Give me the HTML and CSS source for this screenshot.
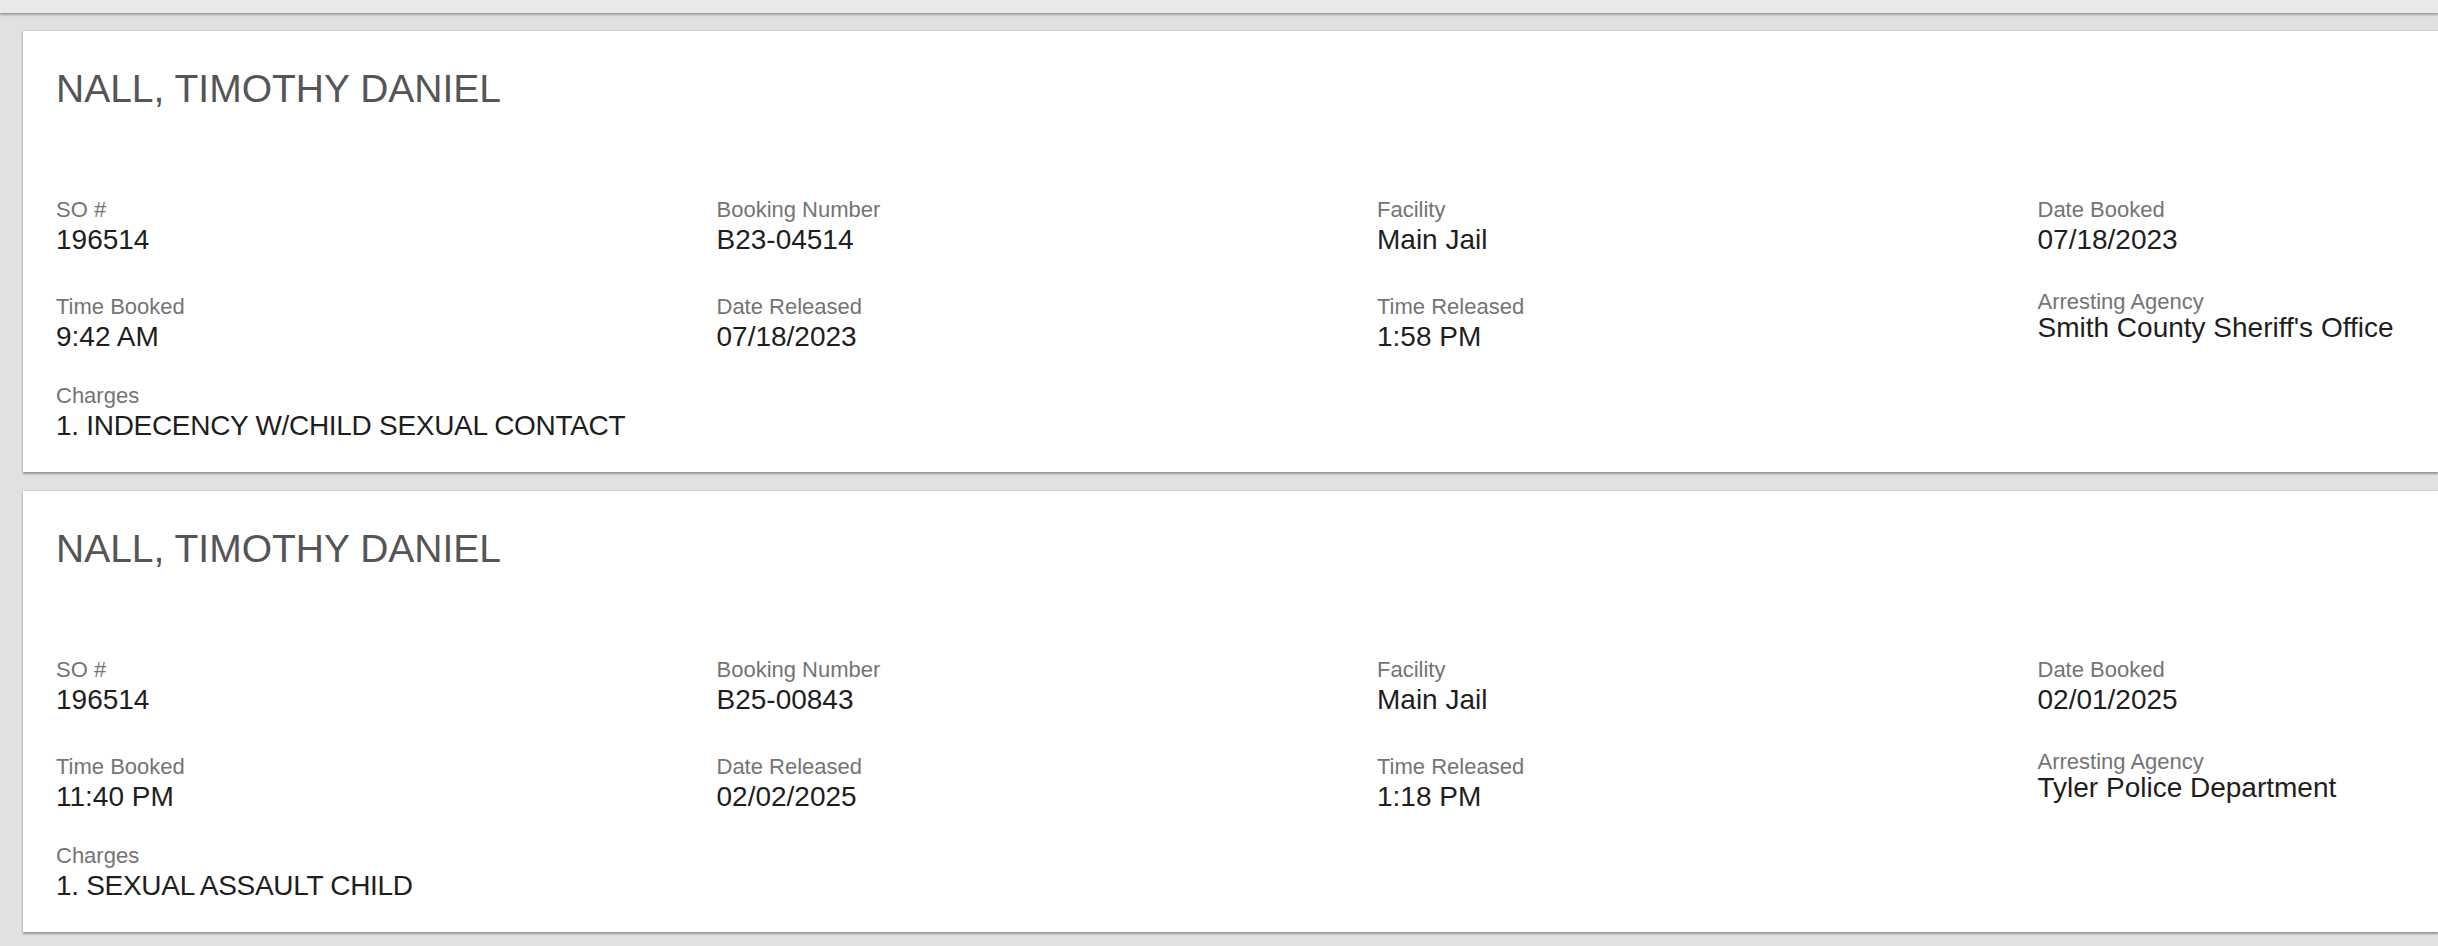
FILE: index.html
```html
<!DOCTYPE html>
<html lang="en">
<head>
<meta charset="utf-8">
<title>Booking Records</title>
<link rel="stylesheet" href="styles.css">
</head>
<body>
<div class="prev-card"></div>

<section class="card">
  <h2 class="name">NALL, TIMOTHY DANIEL</h2>
  <div class="fields">
    <div class="field"><div class="label">SO #</div><div class="value">196514</div></div>
    <div class="field"><div class="label">Booking Number</div><div class="value">B23-04514</div></div>
    <div class="field"><div class="label">Facility</div><div class="value">Main Jail</div></div>
    <div class="field"><div class="label">Date Booked</div><div class="value">07/18/2023</div></div>
    <div class="field"><div class="label">Time Booked</div><div class="value">9:42 AM</div></div>
    <div class="field"><div class="label">Date Released</div><div class="value">07/18/2023</div></div>
    <div class="field"><div class="label">Time Released</div><div class="value">1:58 PM</div></div>
    <div class="field field-agency"><div class="label">Arresting Agency</div><div class="value">Smith County Sheriff's Office</div></div>
  </div>
  <div class="field charges"><div class="label">Charges</div><div class="value value-charge">1. INDECENCY W/CHILD SEXUAL CONTACT</div></div>
</section>

<section class="card">
  <h2 class="name">NALL, TIMOTHY DANIEL</h2>
  <div class="fields">
    <div class="field"><div class="label">SO #</div><div class="value">196514</div></div>
    <div class="field"><div class="label">Booking Number</div><div class="value">B25-00843</div></div>
    <div class="field"><div class="label">Facility</div><div class="value">Main Jail</div></div>
    <div class="field"><div class="label">Date Booked</div><div class="value">02/01/2025</div></div>
    <div class="field"><div class="label">Time Booked</div><div class="value">11:40 PM</div></div>
    <div class="field"><div class="label">Date Released</div><div class="value">02/02/2025</div></div>
    <div class="field"><div class="label">Time Released</div><div class="value">1:18 PM</div></div>
    <div class="field field-agency"><div class="label">Arresting Agency</div><div class="value">Tyler Police Department</div></div>
  </div>
  <div class="field charges"><div class="label">Charges</div><div class="value value-charge">1. SEXUAL ASSAULT CHILD</div></div>
</section>
</body>
</html>
```

FILE: styles.css
```css
html, body {
  margin: 0;
  padding: 0;
  overflow: hidden;
  height: 946px;
}

body {
  background: #e1e1e1;
  font-family: "Liberation Sans", Arial, Helvetica, sans-serif;
}

.prev-card {
  height: 13px;
  background: #e9e9e9;
  box-shadow: 0 2px 2px rgba(0, 0, 0, 0.28), 0 0 1px rgba(0, 0, 0, 0.2);
}

.card {
  background: #ffffff;
  margin: 18px 0 0 23px;
  padding: 35px 0 29px 33px;
  box-shadow: 0 2px 2px rgba(0, 0, 0, 0.3), 0 0 2px rgba(0, 0, 0, 0.22);
}

.card + .card {
  margin-top: 19px;
}

.name {
  margin: 0 0 84px 0;
  font-size: 39px;
  line-height: 46px;
  font-weight: normal;
  color: #555555;
}

.fields {
  display: grid;
  grid-template-columns: 660.5px 660.5px 660.5px 1fr;
  row-gap: 36px;
  align-items: start;
}

.label {
  font-size: 22px;
  line-height: 27px;
  color: #747474;
}

.value {
  font-size: 28px;
  line-height: 34px;
  color: #1e1e1e;
  white-space: nowrap;
}

.value-charge {
  letter-spacing: -0.3px;
}

.field-agency {
  margin-top: -5px;
}

.field-agency .value {
  margin-top: -4px;
}

.charges {
  margin-top: 28px;
}
```
